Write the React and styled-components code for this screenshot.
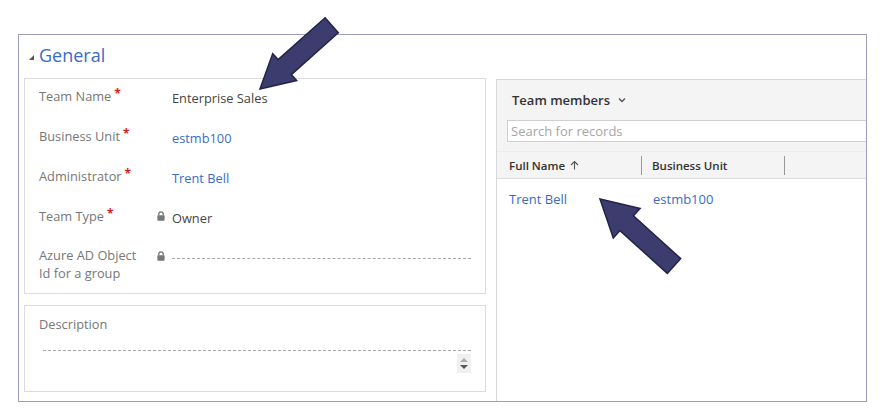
import React from "react";
import styled, { createGlobalStyle } from "styled-components";

const Global = createGlobalStyle`
  html, body { margin: 0; padding: 0; background: #ffffff; }
  body { font-family: "Segoe UI", "Open Sans", "Noto Sans", sans-serif; }
  * { box-sizing: border-box; }
`;

const Page = styled.div`
  position: relative;
  width: 886px;
  height: 415px;
  padding: 34px 0 0 18px;
  overflow: hidden;
`;

const Frame = styled.section`
  width: 849px;
  height: 368px;
  border: 1px solid #9d9dbd;
  display: flex;
  flex-direction: column;
  overflow: hidden;
`;

const SectionHeader = styled.div`
  height: 43px;
  display: flex;
  align-items: center;
  padding: 0 0 3px 10px;
  gap: 5px;
`;

const Caret = styled.span`
  width: 0;
  height: 0;
  border-left: 5px solid transparent;
  border-bottom: 5px solid #555;
  margin-top: 4px;
`;

const SectionTitle = styled.h2`
  margin: 0;
  font-size: 18px;
  font-weight: 400;
  color: #3a6cc4;
  line-height: 24px;
`;

const Body = styled.div`
  flex: 1;
  display: flex;
  padding-left: 5px;
  gap: 10px;
  min-height: 0;
`;

const LeftCol = styled.div`
  width: 462px;
  display: flex;
  flex-direction: column;
  gap: 11px;
`;

const Card = styled.div`
  height: ${(p) => p.$h}px;
  border: 1px solid #dcdcdc;
  padding: ${(p) => p.$pad};
`;

const FieldRow = styled.div`
  display: grid;
  grid-template-columns: 118px 15px 1fr;
  height: 40px;
  align-items: start;
`;

const Label = styled.div`
  font-size: 12.8px;
  line-height: 16px;
  color: #777;
`;

const LabelLine = styled.div`
  height: ${(p) => (p.$multi ? 17.5 : 16)}px;
  line-height: ${(p) => (p.$multi ? 17.5 : 16)}px;
  margin-top: ${(p) => (p.$multi && p.$first ? -0.75 : 0)}px;
  white-space: nowrap;
`;

const Req = styled.span`
  color: #cc1f1f;
  font-size: 12px;
  font-weight: 700;
  margin-left: 3px;
  position: relative;
  top: -3px;
`;

const LockCell = styled.div`
  padding-top: ${(p) => p.$top}px;
  display: flex;
`;

const Value = styled.div`
  font-size: 12.8px;
  line-height: 16px;
  margin-top: 2px;
  color: ${(p) => (p.$link ? "#3a6cc4" : "#444")};
`;

const EmptyLine = styled.div`
  height: 11px;
  border-bottom: 1px dashed #a8a8a8;
`;

const DescLabel = styled.div`
  font-size: 12.8px;
  line-height: 16px;
  color: #777;
`;

const DescArea = styled.div`
  margin-top: 18px;
  margin-left: 4px;
  border-top: 1px dashed #a8a8a8;
  display: flex;
  justify-content: flex-end;
  padding-top: 3px;
`;

const Spinner = styled.div`
  width: 14px;
  height: 19px;
  background: #f0f0f0;
  display: flex;
  flex-direction: column;
  align-items: center;
  justify-content: space-around;
  padding: 2px 0;
`;

const Tri = styled.span`
  width: 0;
  height: 0;
  border-left: 4px solid transparent;
  border-right: 4px solid transparent;
  ${(p) =>
    p.$up
      ? "border-bottom: 4px solid #aaa;"
      : "border-top: 4px solid #555;"}
`;

const Panel = styled.div`
  flex: 1;
  margin-top: 1px;
  border-left: 1px solid #d8d8d8;
  border-top: 1px solid #d8d8d8;
  display: flex;
  flex-direction: column;
`;

const PanelHead = styled.div`
  height: 40px;
  background: #f4f4f4;
  display: flex;
  align-items: center;
  gap: 8px;
  padding: 0 0 0 15px;
`;

const PanelTitle = styled.span`
  font-size: 13px;
  font-weight: 600;
  color: #333;
`;

const SearchWrap = styled.div`
  background: #f4f4f4;
  padding: 0 0 9px 10px;
`;

const Search = styled.div`
  height: 22px;
  border: 1px solid #cfcfcf;
  border-right: none;
  background: #fff;
  font-size: 13px;
  line-height: 20px;
  color: #a6a6a6;
  padding-left: 3px;
`;

const GridHead = styled.div`
  height: 28px;
  background: #f4f4f4;
  border-top: 1px solid #ececec;
  border-bottom: 1px solid #dedede;
  display: grid;
  grid-template-columns: 145px 143px;
  align-items: center;
`;

const HeadCell = styled.div`
  font-size: 11.5px;
  font-weight: 600;
  color: #333;
  padding-left: ${(p) => p.$pl}px;
  border-right: 1px solid #999;
  height: 19px;
  line-height: 19px;
  display: flex;
  align-items: center;
  gap: 5px;
`;

const DataRow = styled.div`
  display: grid;
  grid-template-columns: 144px 1fr;
  padding-top: 12px;
`;

const Cell = styled.div`
  font-size: 13px;
  line-height: 16px;
  color: #3a6cc4;
  padding-left: 12px;
`;

const Overlay = styled.svg`
  position: absolute;
  left: 0;
  top: 0;
  pointer-events: none;
`;

const Lock = () => (
  <svg width="8" height="10" viewBox="0 0 8 10">
    <path d="M1.8 4.5 V3 A2.2 2.2 0 0 1 6.2 3 V4.5" fill="none" stroke="#777" strokeWidth="1.3" />
    <rect x="0.4" y="4.3" width="7.2" height="5.5" rx="0.7" fill="#777" />
  </svg>
);

const Chevron = () => (
  <svg width="8" height="6" viewBox="0 0 8 6">
    <path d="M1 1.5 L4 4.5 L7 1.5" fill="none" stroke="#555" strokeWidth="1.4" />
  </svg>
);

const fields = [
  { label: ["Team Name"], req: true, value: "Enterprise Sales" },
  { label: ["Business Unit"], req: true, value: "estmb100", link: true },
  { label: ["Administrator"], req: true, value: "Trent Bell", link: true },
  { label: ["Team Type"], req: true, value: "Owner", lock: 3 },
  { label: ["Azure AD Object", "Id for a group"], lock: 3, empty: true },
];

export default function App() {
  return (
    <Page>
      <Global />
      <Frame>
        <SectionHeader>
          <Caret />
          <SectionTitle>General</SectionTitle>
        </SectionHeader>
        <Body>
          <LeftCol>
            <Card $h={216} $pad="9px 14px 0 14px">
              {fields.map((f, i) => (
                <FieldRow key={i}>
                  <Label>
                    {f.label.map((l, j) => (
                      <LabelLine key={j} $multi={f.label.length > 1} $first={j === 0}>
                        {l}
                        {f.req && j === f.label.length - 1 && <Req>*</Req>}
                      </LabelLine>
                    ))}
                  </Label>
                  <LockCell $top={f.lock || 0}>{f.lock ? <Lock /> : null}</LockCell>
                  {f.empty ? (
                    <EmptyLine />
                  ) : (
                    <Value $link={f.link}>{f.value}</Value>
                  )}
                </FieldRow>
              ))}
            </Card>
            <Card $h={87} $pad="10px 14px 0 14px">
              <DescLabel>Description</DescLabel>
              <DescArea>
                <Spinner>
                  <Tri $up />
                  <Tri />
                </Spinner>
              </DescArea>
            </Card>
          </LeftCol>
          <Panel>
            <PanelHead>
              <PanelTitle>Team members</PanelTitle>
              <Chevron />
            </PanelHead>
            <SearchWrap>
              <Search>Search for records</Search>
            </SearchWrap>
            <GridHead>
              <HeadCell $pl={12}>
                Full Name
                <svg width="9" height="10" viewBox="0 0 9 10">
                  <path d="M4.5 9.5 V1.5 M1 5 L4.5 1.5 L8 5" fill="none" stroke="#555" strokeWidth="1.1" />
                </svg>
              </HeadCell>
              <HeadCell $pl={10}>Business Unit</HeadCell>
            </GridHead>
            <DataRow>
              <Cell>Trent Bell</Cell>
              <Cell>estmb100</Cell>
            </DataRow>
          </Panel>
        </Body>
      </Frame>
      <Overlay width="886" height="415" viewBox="0 0 886 415">
        <polygon
          points="260,89 296.7,80.5 291.3,74.6 338.3,32.8 325.1,17.8 278.1,59.6 272.7,53.7"
          fill="#3c3c6e"
          stroke="#24244a"
          strokeWidth="1.5"
          strokeLinejoin="miter"
        />
        <polygon
          points="600,199 640.1,208.4 633.4,215.8 680.7,258.6 667.3,273.4 620,230.6 613.3,238"
          fill="#3c3c6e"
          stroke="#24244a"
          strokeWidth="1.5"
          strokeLinejoin="miter"
        />
      </Overlay>
    </Page>
  );
}
